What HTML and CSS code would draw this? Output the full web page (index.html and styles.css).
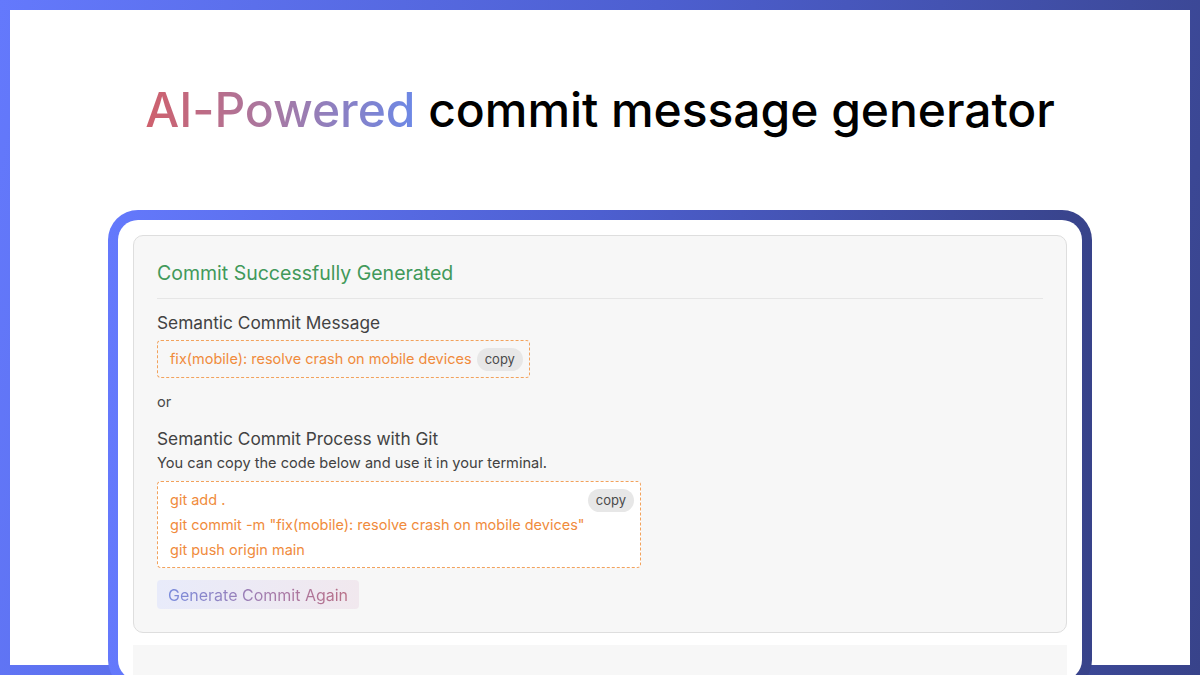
FILE: index.html
```html
<!DOCTYPE html>
<html>
<head>
<meta charset="utf-8">
<link rel="stylesheet" href="styles.css">
</head>
<body>
<div class="frame">
  <div class="page">
    <h1 class="headline"><span class="grad">AI-Powered</span> commit message generator</h1>
    <div class="device">
      <div class="card">
        <h2 class="success">Commit Successfully Generated</h2>
        <div class="divider"></div>
        <h3 class="label">Semantic Commit Message</h3>
        <div class="msgbox">
          <span class="code">fix(mobile): resolve crash on mobile devices</span>
          <span class="copy">copy</span>
        </div>
        <p class="or">or</p>
        <h3 class="label label-git">Semantic Commit Process with Git</h3>
        <p class="hint">You can copy the code below and use it in your terminal.</p>
        <div class="codebox">
          <div class="lines">
            <div class="code">git add .</div>
            <div class="code">git commit -m "fix(mobile): resolve crash on mobile devices"</div>
            <div class="code">git push origin main</div>
          </div>
          <span class="copy">copy</span>
        </div>
        <button class="again"><span class="again-text">Generate Commit Again</span></button>
      </div>
      <div class="panel"></div>
    </div>
  </div>
</div>
</body>
</html>
```
FILE: styles.css
```css
* { box-sizing: border-box; }
html, body { margin: 0; padding: 0; }
body {
  width: 1200px;
  height: 675px;
  overflow: hidden;
  font-family: Inter, "Noto Sans", sans-serif;
  background: #fff;
}
.frame {
  width: 1200px;
  height: 675px;
  padding: 10px;
  background: linear-gradient(100deg, #6479fc 0%, #4d5fd0 50%, #38438a 100%);
  overflow: hidden;
}
.page {
  background: #fff;
  height: 655px;
  display: flex;
  flex-direction: column;
  align-items: center;
}
.headline {
  margin: 62px 0 0;
  height: 76px;
  font-size: 48px;
  font-weight: 500;
  line-height: 76px;
  letter-spacing: -0.05px;
  color: #000;
  text-align: center;
}
.grad {
  background: linear-gradient(90deg, #cf606c 0%, #a57aa6 50%, #6c88e6 100%);
  -webkit-background-clip: text;
  background-clip: text;
  color: transparent;
}
.device {
  margin-top: 62px;
  width: 984px;
  flex: none;
  height: 480px;
  border: 10px solid transparent;
  border-radius: 30px;
  background: linear-gradient(#fff, #fff) padding-box,
              linear-gradient(90deg, #6479fc 0%, #4d5fd0 50%, #38438a 100%) border-box;
  padding: 15px;
}
.card {
  background: #f7f7f7;
  border: 1px solid #dedede;
  border-radius: 10px;
  height: 398px;
  padding: 23px 23px 0;
}
.success {
  margin: 0;
  font-size: 19.5px;
  font-weight: 400;
  color: #41995a;
  line-height: 26px;
  padding-top: 1px;
}
.divider {
  height: 1px;
  background: #e6e6e6;
  margin: 12px 0 12px;
}
.label {
  margin: 0;
  font-size: 17.3px;
  font-weight: 400;
  color: #424242;
  line-height: 24px;
}
.msgbox {
  margin-top: 5px;
  display: inline-flex;
  align-items: center;
  gap: 5px;
  border: 1px dashed #f2a25c;
  border-radius: 4px;
  padding: 6px 6px 6px 12px;
}
.code {
  color: #f08b3c;
  font-size: 14.5px;
  line-height: 24px;
  white-space: nowrap;
}
.copy {
  background: #e7e7e7;
  color: #4a4a4a;
  font-size: 13px;
  line-height: 23px;
  padding: 0 8px;
  border-radius: 12px;
}
.or {
  margin: 13px 0 0;
  font-size: 14.6px;
  line-height: 22px;
  color: #4a4a4a;
}
.label-git { margin-top: 14px; }
.hint {
  margin: 0;
  font-size: 14.6px;
  line-height: 24px;
  color: #424242;
}
.codebox {
  margin-top: 6px;
  width: 484px;
  display: flex;
  justify-content: space-between;
  align-items: flex-start;
  background: #fff;
  border: 1px dashed #f2a25c;
  border-radius: 4px;
  padding: 5px 6px 5px 12px;
}
.codebox .code { line-height: 25px; }
.codebox .copy { margin-top: 2px; }
.again {
  display: block;
  margin-top: 12px;
  border: none;
  border-radius: 4px;
  padding: 0 11px;
  height: 29px;
  background: linear-gradient(90deg, #e8ebfa 0%, #f1e8ee 100%);
  font-family: inherit;
  font-size: 16px;
  cursor: pointer;
}
.again-text {
  background: linear-gradient(90deg, #7a8cdc 0%, #a77aa8 60%, #b86f86 100%);
  -webkit-background-clip: text;
  background-clip: text;
  color: transparent;
}
.panel {
  margin-top: 12px;
  height: 100px;
  background: #f7f7f7;
}
```
